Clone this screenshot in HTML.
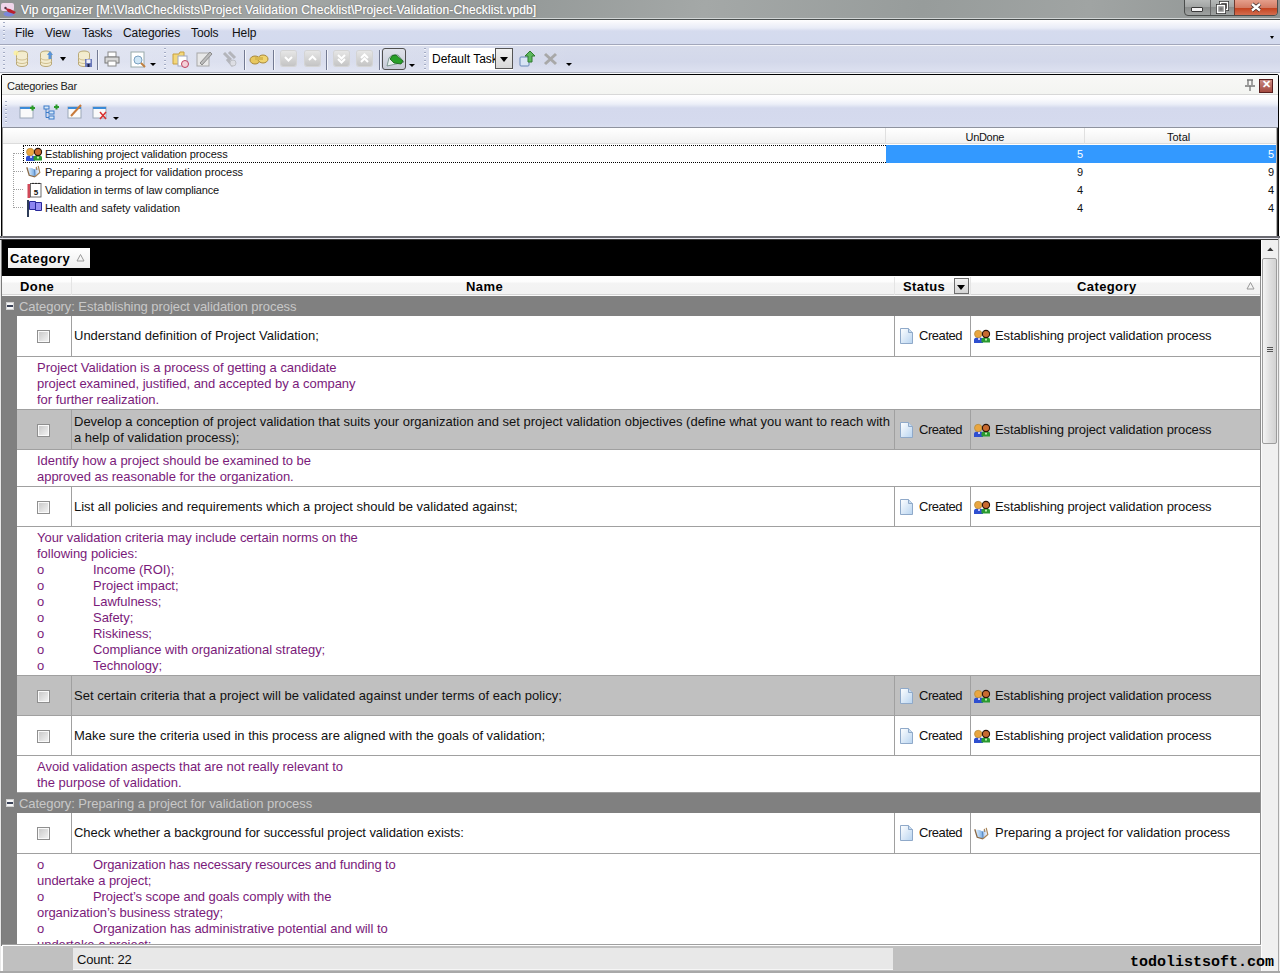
<!DOCTYPE html><html><head><meta charset="utf-8"><style>
*{box-sizing:border-box;margin:0;padding:0}
html,body{width:1280px;height:973px;overflow:hidden;background:#fff;font-family:"Liberation Sans",sans-serif;position:relative}
.a{position:absolute}
.t{white-space:nowrap}
svg{position:absolute;overflow:visible}
.menu{font-size:12px;color:#111;top:26px;letter-spacing:-0.1px}
.sep{position:absolute;width:1px;top:50px;height:20px;background:#737a92;box-shadow:1px 0 0 #f4f6fb}
.grip{position:absolute;width:2px;background:repeating-linear-gradient(#a3abc4 0 1.5px,#f4f6fb 1.5px 2.5px,transparent 2.5px 4px)}
.arr{position:absolute;width:0;height:0;border-left:3px solid transparent;border-right:3px solid transparent;border-top:3px solid #000}
.tree{font-size:11px;color:#111;left:45px;letter-spacing:-0.1px}
.num{font-size:11px;color:#111}
.g{font-size:13px;color:#111}
.n{font-size:13px;color:#7a1a7a;letter-spacing:-0.03px}
.hd{font-size:13px;font-weight:bold;color:#000;top:279px;letter-spacing:0.4px}
.hl{position:absolute;height:1px;background:#a0a0a0}
.vl{position:absolute;width:1px;background:#a0a0a0}
.cb{position:absolute;width:13px;height:13px;border:1px solid #8f8f8f;background:linear-gradient(135deg,#c6c6c6,#f6f6f6);box-shadow:inset 0 0 0 1px #fafafa}
</style></head><body>
<div class="a" style="left:0;top:0;width:1280px;height:18px;background:linear-gradient(100deg,#8f9493 0%,#a2a6a5 22%,#949998 40%,#a4a8a7 55%,#979c9b 72%,#a0a4a3 85%,#8e9392 100%)"></div>
<div class="a" style="left:0;top:18px;width:1280px;height:1px;background:#d2d6d6"></div>
<div class="a" style="left:0;top:19px;width:1280px;height:1px;background:#4a4f4f"></div>
<svg style="left:0;top:0" width="18" height="18"><rect x="1" y="3" width="13" height="8" rx="2" fill="#efd6ea"/><ellipse cx="9" cy="14" rx="5.5" ry="2.5" fill="#7a88d8"/><path d="M5 8 L10 9 L16 12 L14 14 L8 12 Z" fill="#b8202c"/><circle cx="5.5" cy="8" r="1.2" fill="#503040"/></svg>
<div class="a t" style="left:21px;top:3px;font-size:12px;color:#ffffff;letter-spacing:0.1px;text-shadow:0 0 2px #666,0 0 0.5px #fff">Vip organizer [M:\Vlad\Checklists\Project Validation Checklist\Project-Validation-Checklist.vpdb]</div>
<div class="a" style="left:1184px;top:-2px;width:94px;height:18px;border:1px solid #4a4d4c;border-radius:0 0 4px 4px;overflow:hidden;background:linear-gradient(#b9bcbb 0%,#a2a5a4 50%,#8a8d8c 51%,#9fa2a1 100%)"><div class="a" style="left:25px;top:0;width:1px;height:18px;background:#666"></div><div class="a" style="left:49px;top:0;width:44px;height:18px;background:linear-gradient(#e7a390 0%,#d27a62 50%,#c4431f 51%,#d87a5e 100%);border-left:1px solid #6b3a30"></div><div class="a" style="left:6px;top:8px;width:12px;height:5px;background:#f4f4f4;border:1px solid #3a3a3a;border-radius:1px"></div><svg style="left:30.5px;top:1.5px" width="14" height="14"><rect x="4.5" y="1.5" width="7" height="7" fill="none" stroke="#333" stroke-width="3"/><rect x="4.5" y="1.5" width="7" height="7" fill="none" stroke="#fff" stroke-width="1.4"/><rect x="1.5" y="4.5" width="7" height="7" fill="#999" stroke="#333" stroke-width="3"/><rect x="1.5" y="4.5" width="7" height="7" fill="#999" stroke="#fff" stroke-width="1.4"/><rect x="3.5" y="6.5" width="3" height="3" fill="#777"/></svg><svg style="left:64px;top:2px" width="14" height="12"><path d="M3 3 L11 9.5 M11 3 L3 9.5" stroke="#3a2a2a" stroke-width="4"/><path d="M3 3 L11 9.5 M11 3 L3 9.5" stroke="#fff" stroke-width="2.4"/></svg></div>
<div class="a" style="left:0;top:20px;width:1280px;height:24px;background:linear-gradient(#fefefe 0px,#f3f4fa 4px,#e9ecf7 8px,#d5dbee 11px,#d3daee 24px)"></div>
<div class="a" style="left:0;top:44px;width:1280px;height:1px;background:#a2a7bb"></div>
<div class="a" style="left:0;top:45px;width:1280px;height:1px;background:#f7f8fc"></div>
<div class="grip" style="left:3px;top:22px;height:20px"></div>
<div class="a menu t" style="left:15px">File</div>
<div class="a menu t" style="left:45px">View</div>
<div class="a menu t" style="left:82px">Tasks</div>
<div class="a menu t" style="left:123px">Categories</div>
<div class="a menu t" style="left:191px">Tools</div>
<div class="a menu t" style="left:232px">Help</div>
<div class="arr" style="left:1270px;top:36px;border-width:3px 2.5px 0 2.5px"></div>
<div class="a" style="left:0;top:46px;width:1280px;height:26px;background:linear-gradient(#d6dbeb 0%,#d3d8ea 60%,#dde1f0 100%)"></div>
<div class="a" style="left:0;top:46px;width:580px;height:26px;background:linear-gradient(90deg,rgba(240,242,250,.5),rgba(240,242,250,0))"></div>
<div class="grip" style="left:3px;top:48px;height:22px"></div>
<div class="grip" style="left:164px;top:48px;height:22px"></div>
<div class="grip" style="left:424px;top:48px;height:22px"></div>
<div class="sep" style="left:97px"></div>
<div class="sep" style="left:244px"></div>
<div class="sep" style="left:273px"></div>
<div class="sep" style="left:326px"></div>
<div class="sep" style="left:379px"></div>
<svg style="left:14px;top:50px" width="16" height="18"><ellipse cx="8" cy="3.5" rx="5.5" ry="2.5" fill="#f2ecc8" stroke="#b9a878"/><path d="M2.5 3.5 V14 A5.5 2.5 0 0 0 13.5 14 V3.5" fill="#f3ecd0" stroke="#b9a878"/><path d="M2.5 7.5 A5.5 2.5 0 0 0 13.5 7.5 M2.5 11 A5.5 2.5 0 0 0 13.5 11" fill="none" stroke="#d0c090"/><circle cx="2" cy="3" r="2.5" fill="#fff29a" opacity=".8"/></svg>
<svg style="left:38px;top:50px" width="16" height="18"><ellipse cx="8" cy="3.5" rx="5.5" ry="2.5" fill="#f2ecc8" stroke="#b9a878"/><path d="M2.5 3.5 V14 A5.5 2.5 0 0 0 13.5 14 V3.5" fill="#f3ecd0" stroke="#b9a878"/><path d="M2.5 7.5 A5.5 2.5 0 0 0 13.5 7.5 M2.5 11 A5.5 2.5 0 0 0 13.5 11" fill="none" stroke="#d0c090"/><path d="M12 1 L15 5 H13.5 V9 H10.5 V5 H9 Z" fill="#5a94d8"/></svg>
<div class="arr" style="left:60px;top:57px;border-width:4px 3.5px 0 3.5px"></div>
<svg style="left:76px;top:50px" width="16" height="18"><ellipse cx="8" cy="3.5" rx="5.5" ry="2.5" fill="#f2ecc8" stroke="#b9a878"/><path d="M2.5 3.5 V14 A5.5 2.5 0 0 0 13.5 14 V3.5" fill="#f3ecd0" stroke="#b9a878"/><path d="M2.5 7.5 A5.5 2.5 0 0 0 13.5 7.5 M2.5 11 A5.5 2.5 0 0 0 13.5 11" fill="none" stroke="#d0c090"/><rect x="9" y="9" width="7" height="8" fill="#6a78b8"/><rect x="10.5" y="9.5" width="4" height="3.5" fill="#eef0fa"/><rect x="11.5" y="14" width="2" height="3" fill="#1a2040"/></svg>
<svg style="left:104px;top:51px" width="16" height="16"><rect x="4" y="1" width="8" height="5" fill="#fff" stroke="#888"/><rect x="1" y="6" width="14" height="6" fill="#d8d8d8" stroke="#777"/><rect x="4" y="10" width="8" height="5" fill="#fff" stroke="#888"/></svg>
<svg style="left:130px;top:51px" width="16" height="17"><rect x="1" y="1" width="13" height="15" fill="#fff" stroke="#9aa"/><circle cx="8" cy="9" r="4" fill="#cfe6f6" stroke="#7aa0c0"/><path d="M11 12 L15 16" stroke="#c08040" stroke-width="2"/></svg>
<div class="arr" style="left:150px;top:63px;border-width:3px 3px 0 3px"></div>
<svg style="left:172px;top:50px" width="18" height="18"><path d="M1 4 H7 L8 2 H12 V14 H1 Z" fill="#f3d77a" stroke="#c8a040"/><rect x="6" y="6" width="9" height="10" fill="#fff" stroke="#a0a8c0"/><circle cx="13" cy="14" r="3.5" fill="#f4d0d8" stroke="#c04060"/></svg>
<svg style="left:196px;top:50px" width="17" height="17"><rect x="1" y="3" width="12" height="13" fill="#e8e8e8" stroke="#a8a8a8"/><path d="M4 13 L14 2 L16 4 L6 15 Z" fill="#bcbcbc" stroke="#8c8c8c"/></svg>
<svg style="left:221px;top:50px" width="18" height="18" opacity="0.6"><path d="M3 3 L10 10 M8 2 L14 8 M6 9 L12 16" stroke="#999" stroke-width="3"/><circle cx="12" cy="13" r="3" fill="#ddd" stroke="#aaa"/></svg>
<svg style="left:249px;top:53px" width="20" height="12"><ellipse cx="6" cy="7" rx="5" ry="4" fill="#e8c860" stroke="#a8883a"/><ellipse cx="14" cy="6" rx="5" ry="4" fill="#f0d470" stroke="#a8883a"/><rect x="6" y="4" width="8" height="3" fill="#d8b850"/></svg>
<div class="a" style="left:281px;top:51px;width:15px;height:15px;border-radius:2px;background:linear-gradient(#e6e6e6,#c4c4c4);box-shadow:0 0 0 1px #d4d4d4"></div><svg style="left:281px;top:51px" width="15" height="15"><path d="M4 6 L7.5 9.5 L11 6" fill="none" stroke="#fff" stroke-width="2"/></svg>
<div class="a" style="left:305px;top:51px;width:15px;height:15px;border-radius:2px;background:linear-gradient(#e6e6e6,#c4c4c4);box-shadow:0 0 0 1px #d4d4d4"></div><svg style="left:305px;top:51px" width="15" height="15"><path d="M4 9 L7.5 5.5 L11 9" fill="none" stroke="#fff" stroke-width="2"/></svg>
<div class="a" style="left:334px;top:51px;width:15px;height:15px;border-radius:2px;background:linear-gradient(#e6e6e6,#c4c4c4);box-shadow:0 0 0 1px #d4d4d4"></div><svg style="left:334px;top:51px" width="15" height="15"><path d="M4 4 L7.5 7.5 L11 4 M4 8 L7.5 11.5 L11 8" fill="none" stroke="#fff" stroke-width="2"/></svg>
<div class="a" style="left:357px;top:51px;width:15px;height:15px;border-radius:2px;background:linear-gradient(#e6e6e6,#c4c4c4);box-shadow:0 0 0 1px #d4d4d4"></div><svg style="left:357px;top:51px" width="15" height="15"><path d="M4 7 L7.5 3.5 L11 7 M4 11 L7.5 7.5 L11 11" fill="none" stroke="#fff" stroke-width="2"/></svg>
<div class="a" style="left:382px;top:48px;width:24px;height:22px;border:1px solid #505050;border-radius:3px;background:linear-gradient(#dfe2ea,#c8ccd8)"></div>
<svg style="left:386px;top:51px" width="20" height="18"><path d="M1 15 L3 7 Q5 3 9 4 L12 4 L18 11 L10 13 Z" fill="#e8f0ee" stroke="#6a8a80" stroke-width=".8"/><path d="M4 8 Q6 3 10 4 L17 10 L15 13 L8 12 Z" fill="#28a028" stroke="#186018" stroke-width=".8"/></svg>
<div class="arr" style="left:409px;top:64px;border-width:3.5px 3.5px 0 3.5px"></div>
<div class="a" style="left:429px;top:48px;width:84px;height:22px;background:#fff;border:1px solid #fff"></div>
<div class="a t" style="left:432px;top:52px;width:63px;overflow:hidden;font-size:12px;color:#000">Default Task</div>
<div class="a" style="left:495px;top:48px;width:18px;height:21px;border:1px solid #555;background:linear-gradient(#f0f0f0,#d8d8d8)"></div>
<div class="arr" style="left:500px;top:57px;border-width:5px 4px 0 4px"></div>
<svg style="left:519px;top:50px" width="18" height="18"><rect x="1" y="7" width="9" height="9" rx="1" fill="#d8e4f4" stroke="#6a88b8"/><path d="M9 12 L9 6 L6 6 L11 1 L16 6 L13 6 L13 12 Z" fill="#5cb85c" stroke="#2f7a2f"/></svg>
<svg style="left:543px;top:52px" width="15" height="14"><path d="M2 2 L13 12 M13 2 L2 12" stroke="#a8a8a8" stroke-width="3"/></svg>
<div class="arr" style="left:566px;top:63px;border-width:3px 3px 0 3px"></div>
<div class="a" style="left:0;top:72px;width:1280px;height:1px;background:#a9aebb"></div>
<div class="a" style="left:0;top:73px;width:1280px;height:1px;background:#fafbfd"></div>
<div class="a" style="left:1px;top:74px;width:1278px;height:166px;border:1px solid #000;border-radius:2px 2px 0 0;background:#fff"></div>
<div class="a" style="left:2px;top:75px;width:1276px;height:20px;background:linear-gradient(#f8f8f6,#f3f4f1)"></div>
<div class="a" style="left:2px;top:94px;width:1276px;height:1px;background:#d8d8d8"></div>
<div class="a t" style="left:7px;top:80px;font-size:11px;color:#222;letter-spacing:-0.25px">Categories Bar</div>
<svg style="left:1244px;top:79px" width="12" height="13"><path d="M3 1 H9 M4 1 V6 M8 1 V6 M1 7 H11 M6 7 V12" stroke="#777" stroke-width="1.3" fill="none"/></svg>
<div class="a" style="left:1259px;top:79px;width:14px;height:14px;border:1px solid #5a2020;background:linear-gradient(#c98a82,#a44a40)"></div>
<div class="a t" style="left:1262px;top:78px;font-size:11px;font-weight:bold;color:#fff">&#x2715;</div>
<div class="a" style="left:2px;top:95px;width:1276px;height:33px;background:linear-gradient(#ffffff 0px,#fbfbfd 4px,#eceff8 9px,#d4d9ed 13px,#d5daee 28px,#dadff0 32px)"></div>
<div class="grip" style="left:5px;top:101px;height:22px"></div>
<svg style="left:19px;top:104px" width="17" height="16"><rect x="1" y="3" width="13" height="11" fill="#fafafa" stroke="#9ca8b8"/><rect x="1" y="3" width="13" height="2" fill="#3a8ad8"/><path d="M11 4 H16 M13.5 1.5 V6.5" stroke="#2a9a2a" stroke-width="2"/></svg>
<svg style="left:43px;top:104px" width="17" height="16"><rect x="1" y="2" width="5" height="3" fill="#d8e8f8" stroke="#3a7ac8"/><rect x="6" y="7" width="5" height="3" fill="#d8e8f8" stroke="#3a7ac8"/><rect x="6" y="12" width="5" height="3" fill="#d8e8f8" stroke="#3a7ac8"/><path d="M3 5 V13.5 H6 M3 8.5 H6" stroke="#3a7ac8" fill="none"/><path d="M11 3 H16 M13.5 0.5 V5.5" stroke="#2a9a2a" stroke-width="2"/></svg>
<svg style="left:67px;top:104px" width="17" height="16"><rect x="1" y="3" width="13" height="11" fill="#fafafa" stroke="#9ca8b8"/><rect x="1" y="3" width="13" height="2" fill="#3a8ad8"/><path d="M4 12 L14 1" stroke="#c87a3a" stroke-width="2"/></svg>
<svg style="left:92px;top:104px" width="17" height="16"><rect x="1" y="3" width="13" height="11" fill="#fafafa" stroke="#9ca8b8"/><rect x="1" y="3" width="13" height="2" fill="#3a8ad8"/><path d="M8 8 L14 15 M14 8 L8 15" stroke="#d83030" stroke-width="1.5"/></svg>
<div class="arr" style="left:113px;top:117px;border-width:3px 3px 0 3px"></div>
<div class="a" style="left:2px;top:127px;width:1276px;height:1px;background:#8e929e"></div>
<div class="a" style="left:2px;top:128px;width:1274px;height:16px;background:linear-gradient(#ffffff,#f0f0f0)"></div>
<div class="a" style="left:2px;top:143px;width:1274px;height:1px;background:#dcdcdc"></div>
<div class="a" style="left:885px;top:128px;width:1px;height:16px;background:#e0e0e0"></div>
<div class="a" style="left:1084px;top:128px;width:1px;height:16px;background:#e0e0e0"></div>
<div class="a t num" style="left:965.5px;top:131px;letter-spacing:-0.3px">UnDone</div>
<div class="a t num" style="left:1167px;top:131px">Total</div>
<div class="a" style="left:886px;top:145px;width:390px;height:18px;background:#3399ff"></div>
<div class="a" style="left:23px;top:145px;width:863px;height:18px;border:1px dotted #000;border-right:none"></div>
<div class="a" style="left:13px;top:153px;width:1px;height:55px;background:repeating-linear-gradient(#a0a0a0 0 1px,transparent 1px 2px)"></div>
<div class="a" style="left:14px;top:153px;width:9px;height:1px;background:repeating-linear-gradient(90deg,#a0a0a0 0 1px,transparent 1px 2px)"></div>
<div class="a" style="left:14px;top:171px;width:9px;height:1px;background:repeating-linear-gradient(90deg,#a0a0a0 0 1px,transparent 1px 2px)"></div>
<div class="a" style="left:14px;top:189px;width:9px;height:1px;background:repeating-linear-gradient(90deg,#a0a0a0 0 1px,transparent 1px 2px)"></div>
<div class="a" style="left:14px;top:207px;width:9px;height:1px;background:repeating-linear-gradient(90deg,#a0a0a0 0 1px,transparent 1px 2px)"></div>
<div class="a t tree" style="top:148px;letter-spacing:-0.1px">Establishing project validation process</div>
<div class="a t num" style="left:1077px;top:148px;color:#fff">5</div>
<div class="a t num" style="left:1268px;top:148px;color:#fff">5</div>
<div class="a t tree" style="top:166px;letter-spacing:-0.045px">Preparing a project for validation process</div>
<div class="a t num" style="left:1077px;top:166px;color:#111">9</div>
<div class="a t num" style="left:1268px;top:166px;color:#111">9</div>
<div class="a t tree" style="top:184px;letter-spacing:-0.165px">Validation in terms of law compliance</div>
<div class="a t num" style="left:1077px;top:184px;color:#111">4</div>
<div class="a t num" style="left:1268px;top:184px;color:#111">4</div>
<div class="a t tree" style="top:202px;letter-spacing:0px">Health and safety validation</div>
<div class="a t num" style="left:1077px;top:202px;color:#111">4</div>
<div class="a t num" style="left:1268px;top:202px;color:#111">4</div>
<svg style="left:25px;top:147px" width="18" height="15"><path d="M1 14 V11 Q1 8.5 4 8.5 H7 Q10 8.5 10 11 V14 Z" fill="#2e4fd0"/><rect x="5" y="9" width="2" height="2" fill="#c8c8ff"/><path d="M8.5 13.5 V10.5 Q8.5 8.5 11 8.5 H14 Q17 8.5 17 10.5 V13.5 Z" fill="#2a9a30"/><rect x="12" y="9.5" width="2" height="2" fill="#b8f0b0"/><circle cx="5.2" cy="5" r="3.7" fill="#eaa640" stroke="#b08838" stroke-width=".7"/><circle cx="13" cy="5" r="3.6" fill="#c86a30" stroke="#2a1408" stroke-width="1.1"/></svg>
<svg style="left:25px;top:164px" width="17" height="15"><path d="M3 4 Q6.5 3 9.5 5.5 L12 3 Q14 6 14 9 L10 12.5 Q7 11.5 4 11.5 Z" fill="url(#bookg)"/><path d="M9.5 5.5 L10 12" stroke="#5a88c0" stroke-width="1.2"/><path d="M1.8 3.2 L4.2 11.3 L10 12.8" fill="none" stroke="#8a6a48" stroke-width="1.3"/><path d="M10 12.8 L14.8 8.5 L13.2 1.8 M11.3 2.8 L11.8 6" fill="none" stroke="#a88458" stroke-width="1.2"/></svg>
<svg style="left:27px;top:181px" width="16" height="18"><rect x="0.5" y="3" width="2.6" height="14" fill="#d04858"/><rect x="3.5" y="2.5" width="10.5" height="13.5" fill="#fff" stroke="#4a4a4a" stroke-width=".8"/><path d="M5 3 Q6 0.8 7 3 M8 3 Q9 0.8 10 3 M11 3 Q12 0.8 13 3" fill="none" stroke="#222" stroke-width=".9"/><text x="6.8" y="14" font-size="8" font-weight="bold" font-family="Liberation Sans" fill="#111">5</text></svg>
<svg style="left:27px;top:199px" width="16" height="18"><rect x="0" y="1" width="2" height="17" fill="#2e3c58"/><path d="M2.5 2.5 H8.5 V10.5 H2.5 Z" fill="#8c84f0" stroke="#28289a"/><path d="M8.5 3.5 H14.5 V11.5 H8.5 Z" fill="#9890f2" stroke="#28289a"/></svg>
<div class="a" style="left:0;top:236px;width:1280px;height:4px;background:linear-gradient(#6b6b72 0px,#6b6b72 2px,#e8e8f0 2px,#e8e8f0 3px,#3a3a3a 3px)"></div>
<div class="a" style="left:1276px;top:128px;width:1px;height:108px;background:#b4b4b4"></div>
<div class="a" style="left:1277px;top:128px;width:1px;height:108px;background:#262626"></div>
<div class="a" style="left:2px;top:128px;width:1px;height:110px;background:#909090"></div>
<div class="a" style="left:0;top:240px;width:1280px;height:36px;background:#000"></div>
<div class="a" style="left:8px;top:248px;width:82px;height:20px;background:linear-gradient(#ffffff,#eeeeee)"></div>
<div class="a t" style="left:10px;top:251px;font-size:13px;font-weight:bold;color:#000;letter-spacing:0.5px">Category</div>
<svg style="left:76px;top:253px" width="9" height="9"><path d="M1 8 L4.5 1.5 L8 8 Z" fill="none" stroke="#999"/></svg>
<div class="a" style="left:2px;top:276px;width:1259px;height:20px;background:linear-gradient(#ffffff 0px,#fdfdfd 6px,#f4f4f4 7px,#f2f2f2 18px)"></div>
<div class="a" style="left:2px;top:294px;width:1259px;height:1px;background:#d6d6d6"></div>
<div class="a" style="left:2px;top:295px;width:1259px;height:1px;background:#fafafa"></div>
<div class="a" style="left:71px;top:277px;width:1px;height:18px;background:#e4e4e4"></div>
<div class="a" style="left:894px;top:277px;width:1px;height:18px;background:#e4e4e4"></div>
<div class="a" style="left:970px;top:277px;width:1px;height:18px;background:#e4e4e4"></div>
<div class="a t hd" style="left:20px">Done</div>
<div class="a t hd" style="left:466px">Name</div>
<div class="a t hd" style="left:903px">Status</div>
<div class="a" style="left:954px;top:278px;width:15px;height:16px;border:1px solid #6f6f6f;background:linear-gradient(#f4f4f4,#d4d4d4)"></div>
<div class="arr" style="left:957px;top:285px;border-width:5px 4.5px 0 4.5px"></div>
<div class="a t hd" style="left:1077px">Category</div>
<svg style="left:1246px;top:281px" width="9" height="9"><path d="M1 8 L4.5 1.5 L8 8 Z" fill="none" stroke="#999"/></svg>
<div class="a" style="left:1px;top:240px;width:1px;height:706px;background:#7a7a7a"></div>
<div class="a" style="left:0;top:240px;width:1px;height:733px;background:#e8e8e8"></div>
<div class="a" style="left:2px;top:296px;width:15px;height:650px;background:#808080"></div>
<svg width="0" height="0" style="left:0;top:0"><defs><linearGradient id="docg" x1="0" y1="0" x2="1" y2="1"><stop offset="0" stop-color="#ffffff"/><stop offset="1" stop-color="#b8d4f0"/></linearGradient><linearGradient id="bookg" x1="0" y1="0" x2="1" y2="0"><stop offset="0" stop-color="#e0f0ff"/><stop offset=".5" stop-color="#8ab8e8"/><stop offset="1" stop-color="#f0f4ff"/></linearGradient></defs></svg>
<div class="a" style="left:2px;top:296px;width:1259px;height:20px;background:#808080"></div>
<div class="a" style="left:6px;top:302px;width:8px;height:8px;background:#f6f6f6;border:1px solid #d0d0d0"></div>
<div class="a" style="left:7px;top:305px;width:6px;height:2px;background:#3a4258"></div>
<div class="a t g" style="left:19px;top:299px;color:#c8c8c8;letter-spacing:-0.06px">Category: Establishing project validation process</div>
<div class="a" style="left:17px;top:316px;width:1244px;height:41px;background:#fff"></div>
<div class="hl" style="left:17px;top:356px;width:1244px"></div>
<div class="vl" style="left:71px;top:316px;height:40px"></div>
<div class="vl" style="left:894px;top:316px;height:40px"></div>
<div class="vl" style="left:970px;top:316px;height:40px"></div>
<div class="cb" style="left:37px;top:330px"></div>
<div class="a t g" style="left:74px;top:328px;line-height:16px;letter-spacing:0px">Understand definition of Project Validation;</div>
<svg style="left:900px;top:328px" width="14" height="17"><path d="M0.5 0.5 H8.5 L12.5 4.5 V15.5 H0.5 Z" fill="url(#docg)" stroke="#8fa9c9"/><path d="M8.5 0.5 V4.5 H12.5" fill="#c8dcf0" stroke="#8fa9c9"/></svg>
<div class="a t g" style="left:919px;top:328px;line-height:16px;letter-spacing:-0.45px">Created</div>
<svg style="left:973px;top:329px" width="18" height="15"><path d="M1 14 V11 Q1 8.5 4 8.5 H7 Q10 8.5 10 11 V14 Z" fill="#2e4fd0"/><rect x="5" y="9" width="2" height="2" fill="#c8c8ff"/><path d="M8.5 13.5 V10.5 Q8.5 8.5 11 8.5 H14 Q17 8.5 17 10.5 V13.5 Z" fill="#2a9a30"/><rect x="12" y="9.5" width="2" height="2" fill="#b8f0b0"/><circle cx="5.2" cy="5" r="3.7" fill="#eaa640" stroke="#b08838" stroke-width=".7"/><circle cx="13" cy="5" r="3.6" fill="#c86a30" stroke="#2a1408" stroke-width="1.1"/></svg>
<div class="a t g" style="left:995px;top:328px;line-height:16px;letter-spacing:-0.1px">Establishing project validation process</div>
<div class="a" style="left:17px;top:357px;width:1244px;height:53px;background:#fff"></div>
<div class="hl" style="left:17px;top:409px;width:1244px"></div>
<div class="a t n" style="left:37px;top:360px;line-height:16px">Project Validation is a process of getting a candidate</div>
<div class="a t n" style="left:37px;top:376px;line-height:16px">project examined, justified, and accepted by a company</div>
<div class="a t n" style="left:37px;top:392px;line-height:16px">for further realization.</div>
<div class="a" style="left:17px;top:410px;width:1244px;height:40px;background:#c0c0c0"></div>
<div class="hl" style="left:17px;top:449px;width:1244px"></div>
<div class="vl" style="left:71px;top:410px;height:39px"></div>
<div class="vl" style="left:894px;top:410px;height:39px"></div>
<div class="vl" style="left:970px;top:410px;height:39px"></div>
<div class="cb" style="left:37px;top:424px"></div>
<div class="a t g" style="left:74px;top:414px;line-height:16px;letter-spacing:0px">Develop a conception of project validation that suits your organization and set project validation objectives (define what you want to reach with</div>
<div class="a t g" style="left:74px;top:430px;line-height:16px;letter-spacing:0px">a help of validation process);</div>
<svg style="left:900px;top:422px" width="14" height="17"><path d="M0.5 0.5 H8.5 L12.5 4.5 V15.5 H0.5 Z" fill="url(#docg)" stroke="#8fa9c9"/><path d="M8.5 0.5 V4.5 H12.5" fill="#c8dcf0" stroke="#8fa9c9"/></svg>
<div class="a t g" style="left:919px;top:422px;line-height:16px;letter-spacing:-0.45px">Created</div>
<svg style="left:973px;top:423px" width="18" height="15"><path d="M1 14 V11 Q1 8.5 4 8.5 H7 Q10 8.5 10 11 V14 Z" fill="#2e4fd0"/><rect x="5" y="9" width="2" height="2" fill="#c8c8ff"/><path d="M8.5 13.5 V10.5 Q8.5 8.5 11 8.5 H14 Q17 8.5 17 10.5 V13.5 Z" fill="#2a9a30"/><rect x="12" y="9.5" width="2" height="2" fill="#b8f0b0"/><circle cx="5.2" cy="5" r="3.7" fill="#eaa640" stroke="#b08838" stroke-width=".7"/><circle cx="13" cy="5" r="3.6" fill="#c86a30" stroke="#2a1408" stroke-width="1.1"/></svg>
<div class="a t g" style="left:995px;top:422px;line-height:16px;letter-spacing:-0.1px">Establishing project validation process</div>
<div class="a" style="left:17px;top:450px;width:1244px;height:37px;background:#fff"></div>
<div class="hl" style="left:17px;top:486px;width:1244px"></div>
<div class="a t n" style="left:37px;top:453px;line-height:16px">Identify how a project should be examined to be</div>
<div class="a t n" style="left:37px;top:469px;line-height:16px">approved as reasonable for the organization.</div>
<div class="a" style="left:17px;top:487px;width:1244px;height:40px;background:#fff"></div>
<div class="hl" style="left:17px;top:526px;width:1244px"></div>
<div class="vl" style="left:71px;top:487px;height:39px"></div>
<div class="vl" style="left:894px;top:487px;height:39px"></div>
<div class="vl" style="left:970px;top:487px;height:39px"></div>
<div class="cb" style="left:37px;top:501px"></div>
<div class="a t g" style="left:74px;top:499px;line-height:16px;letter-spacing:0px">List all policies and requirements which a project should be validated against;</div>
<svg style="left:900px;top:499px" width="14" height="17"><path d="M0.5 0.5 H8.5 L12.5 4.5 V15.5 H0.5 Z" fill="url(#docg)" stroke="#8fa9c9"/><path d="M8.5 0.5 V4.5 H12.5" fill="#c8dcf0" stroke="#8fa9c9"/></svg>
<div class="a t g" style="left:919px;top:499px;line-height:16px;letter-spacing:-0.45px">Created</div>
<svg style="left:973px;top:500px" width="18" height="15"><path d="M1 14 V11 Q1 8.5 4 8.5 H7 Q10 8.5 10 11 V14 Z" fill="#2e4fd0"/><rect x="5" y="9" width="2" height="2" fill="#c8c8ff"/><path d="M8.5 13.5 V10.5 Q8.5 8.5 11 8.5 H14 Q17 8.5 17 10.5 V13.5 Z" fill="#2a9a30"/><rect x="12" y="9.5" width="2" height="2" fill="#b8f0b0"/><circle cx="5.2" cy="5" r="3.7" fill="#eaa640" stroke="#b08838" stroke-width=".7"/><circle cx="13" cy="5" r="3.6" fill="#c86a30" stroke="#2a1408" stroke-width="1.1"/></svg>
<div class="a t g" style="left:995px;top:499px;line-height:16px;letter-spacing:-0.1px">Establishing project validation process</div>
<div class="a" style="left:17px;top:527px;width:1244px;height:149px;background:#fff"></div>
<div class="hl" style="left:17px;top:675px;width:1244px"></div>
<div class="a t n" style="left:37px;top:530px;line-height:16px">Your validation criteria may include certain norms on the</div>
<div class="a t n" style="left:37px;top:546px;line-height:16px">following policies:</div>
<div class="a t n" style="left:37px;top:562px;line-height:16px">o</div>
<div class="a t n" style="left:93px;top:562px;line-height:16px">Income (ROI);</div>
<div class="a t n" style="left:37px;top:578px;line-height:16px">o</div>
<div class="a t n" style="left:93px;top:578px;line-height:16px">Project impact;</div>
<div class="a t n" style="left:37px;top:594px;line-height:16px">o</div>
<div class="a t n" style="left:93px;top:594px;line-height:16px">Lawfulness;</div>
<div class="a t n" style="left:37px;top:610px;line-height:16px">o</div>
<div class="a t n" style="left:93px;top:610px;line-height:16px">Safety;</div>
<div class="a t n" style="left:37px;top:626px;line-height:16px">o</div>
<div class="a t n" style="left:93px;top:626px;line-height:16px">Riskiness;</div>
<div class="a t n" style="left:37px;top:642px;line-height:16px">o</div>
<div class="a t n" style="left:93px;top:642px;line-height:16px">Compliance with organizational strategy;</div>
<div class="a t n" style="left:37px;top:658px;line-height:16px">o</div>
<div class="a t n" style="left:93px;top:658px;line-height:16px">Technology;</div>
<div class="a" style="left:17px;top:676px;width:1244px;height:40px;background:#c0c0c0"></div>
<div class="hl" style="left:17px;top:715px;width:1244px"></div>
<div class="vl" style="left:71px;top:676px;height:39px"></div>
<div class="vl" style="left:894px;top:676px;height:39px"></div>
<div class="vl" style="left:970px;top:676px;height:39px"></div>
<div class="cb" style="left:37px;top:690px"></div>
<div class="a t g" style="left:74px;top:688px;line-height:16px;letter-spacing:0.043px">Set certain criteria that a project will be validated against under terms of each policy;</div>
<svg style="left:900px;top:688px" width="14" height="17"><path d="M0.5 0.5 H8.5 L12.5 4.5 V15.5 H0.5 Z" fill="url(#docg)" stroke="#8fa9c9"/><path d="M8.5 0.5 V4.5 H12.5" fill="#c8dcf0" stroke="#8fa9c9"/></svg>
<div class="a t g" style="left:919px;top:688px;line-height:16px;letter-spacing:-0.45px">Created</div>
<svg style="left:973px;top:689px" width="18" height="15"><path d="M1 14 V11 Q1 8.5 4 8.5 H7 Q10 8.5 10 11 V14 Z" fill="#2e4fd0"/><rect x="5" y="9" width="2" height="2" fill="#c8c8ff"/><path d="M8.5 13.5 V10.5 Q8.5 8.5 11 8.5 H14 Q17 8.5 17 10.5 V13.5 Z" fill="#2a9a30"/><rect x="12" y="9.5" width="2" height="2" fill="#b8f0b0"/><circle cx="5.2" cy="5" r="3.7" fill="#eaa640" stroke="#b08838" stroke-width=".7"/><circle cx="13" cy="5" r="3.6" fill="#c86a30" stroke="#2a1408" stroke-width="1.1"/></svg>
<div class="a t g" style="left:995px;top:688px;line-height:16px;letter-spacing:-0.1px">Establishing project validation process</div>
<div class="a" style="left:17px;top:716px;width:1244px;height:40px;background:#fff"></div>
<div class="hl" style="left:17px;top:755px;width:1244px"></div>
<div class="vl" style="left:71px;top:716px;height:39px"></div>
<div class="vl" style="left:894px;top:716px;height:39px"></div>
<div class="vl" style="left:970px;top:716px;height:39px"></div>
<div class="cb" style="left:37px;top:730px"></div>
<div class="a t g" style="left:74px;top:728px;line-height:16px;letter-spacing:0px">Make sure the criteria used in this process are aligned with the goals of validation;</div>
<svg style="left:900px;top:728px" width="14" height="17"><path d="M0.5 0.5 H8.5 L12.5 4.5 V15.5 H0.5 Z" fill="url(#docg)" stroke="#8fa9c9"/><path d="M8.5 0.5 V4.5 H12.5" fill="#c8dcf0" stroke="#8fa9c9"/></svg>
<div class="a t g" style="left:919px;top:728px;line-height:16px;letter-spacing:-0.45px">Created</div>
<svg style="left:973px;top:729px" width="18" height="15"><path d="M1 14 V11 Q1 8.5 4 8.5 H7 Q10 8.5 10 11 V14 Z" fill="#2e4fd0"/><rect x="5" y="9" width="2" height="2" fill="#c8c8ff"/><path d="M8.5 13.5 V10.5 Q8.5 8.5 11 8.5 H14 Q17 8.5 17 10.5 V13.5 Z" fill="#2a9a30"/><rect x="12" y="9.5" width="2" height="2" fill="#b8f0b0"/><circle cx="5.2" cy="5" r="3.7" fill="#eaa640" stroke="#b08838" stroke-width=".7"/><circle cx="13" cy="5" r="3.6" fill="#c86a30" stroke="#2a1408" stroke-width="1.1"/></svg>
<div class="a t g" style="left:995px;top:728px;line-height:16px;letter-spacing:-0.1px">Establishing project validation process</div>
<div class="a" style="left:17px;top:756px;width:1244px;height:37px;background:#fff"></div>
<div class="hl" style="left:17px;top:792px;width:1244px"></div>
<div class="a t n" style="left:37px;top:759px;line-height:16px">Avoid validation aspects that are not really relevant to</div>
<div class="a t n" style="left:37px;top:775px;line-height:16px">the purpose of validation.</div>
<div class="a" style="left:2px;top:793px;width:1259px;height:20px;background:#808080"></div>
<div class="a" style="left:6px;top:799px;width:8px;height:8px;background:#f6f6f6;border:1px solid #d0d0d0"></div>
<div class="a" style="left:7px;top:802px;width:6px;height:2px;background:#3a4258"></div>
<div class="a t g" style="left:19px;top:796px;color:#c8c8c8;letter-spacing:-0.06px">Category: Preparing a project for validation process</div>
<div class="a" style="left:17px;top:813px;width:1244px;height:41px;background:#fff"></div>
<div class="hl" style="left:17px;top:853px;width:1244px"></div>
<div class="vl" style="left:71px;top:813px;height:40px"></div>
<div class="vl" style="left:894px;top:813px;height:40px"></div>
<div class="vl" style="left:970px;top:813px;height:40px"></div>
<div class="cb" style="left:37px;top:827px"></div>
<div class="a t g" style="left:74px;top:825px;line-height:16px;letter-spacing:-0.06px">Check whether a background for successful project validation exists:</div>
<svg style="left:900px;top:825px" width="14" height="17"><path d="M0.5 0.5 H8.5 L12.5 4.5 V15.5 H0.5 Z" fill="url(#docg)" stroke="#8fa9c9"/><path d="M8.5 0.5 V4.5 H12.5" fill="#c8dcf0" stroke="#8fa9c9"/></svg>
<div class="a t g" style="left:919px;top:825px;line-height:16px;letter-spacing:-0.45px">Created</div>
<svg style="left:973px;top:826px" width="17" height="15"><path d="M3 4 Q6.5 3 9.5 5.5 L12 3 Q14 6 14 9 L10 12.5 Q7 11.5 4 11.5 Z" fill="url(#bookg)"/><path d="M9.5 5.5 L10 12" stroke="#5a88c0" stroke-width="1.2"/><path d="M1.8 3.2 L4.2 11.3 L10 12.8" fill="none" stroke="#8a6a48" stroke-width="1.3"/><path d="M10 12.8 L14.8 8.5 L13.2 1.8 M11.3 2.8 L11.8 6" fill="none" stroke="#a88458" stroke-width="1.2"/></svg>
<div class="a t g" style="left:995px;top:825px;line-height:16px;letter-spacing:-0.03px">Preparing a project for validation process</div>
<div class="a" style="left:17px;top:854px;width:1244px;height:91px;background:#fff;overflow:hidden"><div class="a t n" style="left:20px;top:3px;line-height:16px">o</div><div class="a t n" style="left:76px;top:3px;line-height:16px"><span style="letter-spacing:-0.1px">Organization has necessary resources and funding to</span></div><div class="a t n" style="left:20px;top:19px;line-height:16px">undertake a project;</div><div class="a t n" style="left:20px;top:35px;line-height:16px">o</div><div class="a t n" style="left:76px;top:35px;line-height:16px"><span style="letter-spacing:-0.066px">Project&#8217;s scope and goals comply with the</span></div><div class="a t n" style="left:20px;top:51px;line-height:16px"><span style="letter-spacing:-0.07px">organization&#8217;s business strategy;</span></div><div class="a t n" style="left:20px;top:67px;line-height:16px">o</div><div class="a t n" style="left:76px;top:67px;line-height:16px">Organization has administrative potential and will to</div><div class="a t n" style="left:20px;top:83px;line-height:16px">undertake a project;</div></div>
<div class="a" style="left:1260px;top:276px;width:1px;height:669px;background:#8e8e8e"></div>
<div class="a" style="left:1261px;top:240px;width:17px;height:733px;background:#f0f0f0;border-left:1px solid #fcfcfc"></div>
<svg style="left:1266px;top:246px" width="9" height="6"><path d="M1.2 5 L4.3 1.5 L7.5 5 Z" fill="#333"/></svg>
<div class="a" style="left:1262px;top:258px;width:15px;height:186px;border:1px solid #9c9c9c;border-radius:2px;background:linear-gradient(90deg,#f4f4f4,#e0e0e0 50%,#d2d2d2)"></div>
<svg style="left:1266px;top:346px" width="8" height="8"><path d="M1 1.5 H7 M1 3.5 H7 M1 5.5 H7" stroke="#555"/></svg>
<div class="a" style="left:1278px;top:238px;width:1px;height:735px;background:#a8a8a8"></div>
<div class="a" style="left:1279px;top:238px;width:1px;height:735px;background:#f0f0f0"></div>
<div class="a" style="left:2px;top:945px;width:1259px;height:28px;background:#c0c0c0;border-top:1px solid #fdfdfd;border-left:1px solid #fdfdfd"></div>
<div class="a" style="left:2px;top:944px;width:1259px;height:1px;background:#a0a0a0"></div>
<div class="a" style="left:73px;top:948px;width:820px;height:22px;background:#e8e8e8;border-bottom:1px solid #f6f6f6"></div>
<div class="a t g" style="left:77px;top:952px;color:#111;letter-spacing:-0.2px">Count: 22</div>
<div class="a" style="left:0;top:971px;width:1280px;height:2px;background:#a8a8a8"></div>
<div class="a t" style="left:1130px;top:954px;font-family:'Liberation Mono',monospace;font-weight:bold;font-size:15px;color:#000;letter-spacing:0px">todolistsoft.com</div>
</body></html>
